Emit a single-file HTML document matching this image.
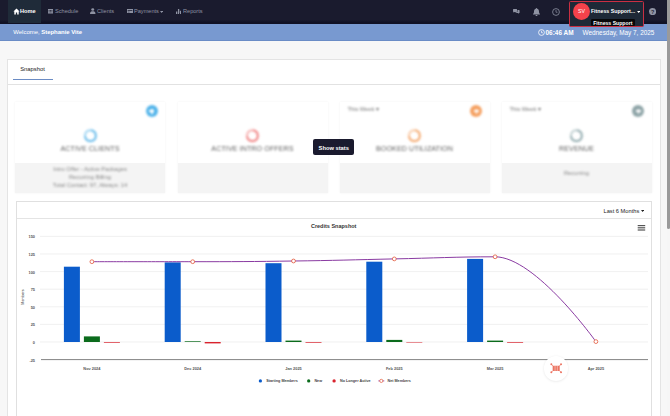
<!DOCTYPE html>
<html><head><meta charset="utf-8"><title>Home</title>
<style>
*{box-sizing:border-box;margin:0;padding:0}
html,body{width:670px;height:416px;overflow:hidden;background:#f7f7f7;font-family:"Liberation Sans",sans-serif;}
.abs{position:absolute}
#nav{left:0;top:0;width:667px;height:23.5px;background:linear-gradient(#1a1b2e 0,#1a1b2e 19.5px,#101124 22.5px,#101124 100%)}
#home{left:7.5px;top:0;width:33.7px;height:22.5px;background:#1f2b39}
.navt{top:8px;font-size:5.6px;color:#8f93a3;white-space:nowrap;line-height:7px}
#welcome{left:0;top:23.5px;width:667px;height:17.5px;background:#7899d0;border-bottom:0.6px solid #6a8cc6}
#panel{left:6.5px;top:59px;width:654.5px;height:370px;background:#fff;border:1px solid #e4e4e4}
.card{top:102px;height:90.5px;width:150px;background:#f4f4f4;box-shadow:0 0 2px rgba(0,0,0,0.06)}
.card .b{filter:blur(1.25px)}
.card .top{position:absolute;left:0;top:0;width:100%;height:60.5px;background:#fff}
.ring{position:absolute;left:68.6px;top:27.3px;width:13.4px;height:13.4px;border-radius:50%;border:2.7px solid #000}
.ctitle{position:absolute;left:0;width:100%;top:43px;text-align:center;font-size:7.1px;color:#5e5e5e;letter-spacing:0.1px;line-height:8px}
.plus{position:absolute;left:130.9px;top:3.1px;width:12px;height:12px;border-radius:50%}
.plus:before{content:"";position:absolute;left:3.5px;top:5.2px;width:5px;height:1.6px;background:#fff}
.plus:after{content:"";position:absolute;left:5.2px;top:3.5px;width:1.6px;height:5px;background:#fff}
.week{position:absolute;left:8px;top:4.1px;font-size:5.7px;color:#757575;line-height:7px;white-space:nowrap}
.foot{position:absolute;left:0;width:100%;text-align:center;font-size:5.8px;color:#888;line-height:8px}
#chartbox{left:16px;top:201px;width:636px;height:230px;background:#fff;border:1px solid #e0e0e0}
#sb{left:666.5px;top:0;width:3.5px;height:416px;background:#f6f6f6}
#sbt{left:666.5px;top:0;width:3.5px;height:228.5px;background:#9a9a9a;border-radius:0 0 1.5px 1.5px}
svg text{font-family:"Liberation Sans",sans-serif}
</style></head><body>
<div class="abs" id="nav"></div>
<div class="abs" id="home"></div>
<svg class="abs" style="left:13px;top:8px" width="7" height="7" viewBox="0 0 16 16"><path d="M8 1 L1 8 H3 V15 H6.5 V10 H9.5 V15 H13 V8 H15 Z" fill="#fff"/></svg>
<div class="abs navt" style="left:20px;color:#fff;font-weight:bold">Home</div>
<svg class="abs" style="left:48px;top:9px" width="5" height="4.6" viewBox="0 0 12 12" preserveAspectRatio="none"><path d="M0 0H12V12H0Z M1.5 3.5V5.5H3.5V3.5Z M4.5 3.5V5.5H7.5V3.5Z M8.5 3.5V5.5H10.5V3.5Z M1.5 6.5V8.5H3.5V6.5Z M4.5 6.5V8.5H7.5V6.5Z M8.5 6.5V8.5H10.5V6.5Z" fill="#8f93a3" fill-rule="evenodd"/></svg>
<div class="abs navt" style="left:55px">Schedule</div>
<svg class="abs" style="left:90px;top:8.200px" width="5.500" height="6" viewBox="0 0 12 14" preserveAspectRatio="none"><circle cx="6" cy="3.5" r="3.2" fill="#8f93a3"/><path d="M0 14 C0 8 3 7.5 6 7.5 C9 7.5 12 8 12 14Z" fill="#8f93a3"/></svg>
<div class="abs navt" style="left:97px">Clients</div>
<svg class="abs" style="left:126.8px;top:9px" width="6" height="4.4" viewBox="0 0 14 10" preserveAspectRatio="none"><path d="M0 0H14V10H0Z M1.5 3V4.5H12.5V3Z M2 6.5V7.5H6V6.5Z" fill="#8f93a3" fill-rule="evenodd"/></svg>
<div class="abs navt" style="left:134px">Payments</div>
<svg class="abs" style="left:160.2px;top:11px" width="3.2" height="2" viewBox="0 0 8 5"><path d="M0 0H8L4 5Z" fill="#8f93a3"/></svg>
<svg class="abs" style="left:176.3px;top:8.8px" width="5.2" height="5" viewBox="0 0 12 12" preserveAspectRatio="none"><path d="M0 6H3V12H0Z M4.5 0H7.5V12H4.5Z M9 4H12V12H9Z" fill="#8f93a3"/></svg>
<div class="abs navt" style="left:183px">Reports</div>

<div class="abs" id="welcome"></div>
<!-- right icons -->
<svg class="abs" style="left:513px;top:8.7px" width="6.6" height="5.1" viewBox="0 0 18 14"><path d="M0 1.5Q0 0 1.5 0H9.5Q11 0 11 1.5V6.5Q11 8 9.5 8H4L1.5 10.5V8Q0 8 0 6.500Z" fill="#8f93a3"/><path d="M12.200 3H16.500Q18 3 18 4.500V9.500Q18 11 16.500 11V13.500L14 11H8.500Q7 11 7 9.500V9.200H10Q12.200 9.200 12.200 7Z" fill="#8f93a3"/></svg>
<svg class="abs" style="left:533px;top:7.5px" width="7" height="8" viewBox="0 0 14 16"><path d="M7 0C8 0 8.300 0.800 8.300 1.400C10.800 2 12 4 12 7C12 10 13 11 14 12V13H0V12C1 11 2 10 2 7C2 4 3.200 2 5.700 1.400C5.700 0.800 6 0 7 0Z M5 14H9C9 15.200 8.200 16 7 16C5.800 16 5 15.200 5 14Z" fill="#8f93a3"/></svg>
<svg class="abs" style="left:552px;top:7.5px" width="8" height="8" viewBox="0 0 16 16"><circle cx="8" cy="8" r="6.800" fill="none" stroke="#8f93a3" stroke-width="1.600"/><path d="M8 4V8.500H11" fill="none" stroke="#8f93a3" stroke-width="1.400"/></svg>

<div class="abs" style="left:568.500px;top:0.500px;width:75.500px;height:26px;border:0.9px solid #c92f42;border-radius:1.5px;background:#1e2937"></div>
<div class="abs" style="left:573px;top:2.500px;width:17px;height:17px;border-radius:50%;background:#f4424b"></div>
<div class="abs" style="left:573px;top:8px;width:17px;text-align:center;font-size:5.200px;line-height:7px;color:#fff">SV</div>
<div class="abs" style="left:590.900px;top:8.200px;font-size:5.250px;line-height:7px;color:#fff;font-weight:bold;white-space:nowrap">Fitness Support...</div>
<svg class="abs" style="left:637px;top:11.2px" width="3.3" height="2" viewBox="0 0 8 5"><path d="M0 0H8L4 5Z" fill="#fff"/></svg>
<div class="abs" style="left:590.800px;top:19.400px;width:44px;height:7px;background:#08080a;border-radius:1.300px"></div>
<div class="abs" style="left:590.800px;top:20px;width:44px;text-align:center;font-size:5.150px;line-height:6.500px;color:#fff;font-weight:bold;white-space:nowrap">Fitness Support</div>
<svg class="abs" style="left:648.8px;top:7.9px" width="7.2" height="7.2" viewBox="0 0 16 16"><circle cx="8" cy="8" r="8" fill="#8f93a3"/><text x="8" y="12.500" font-size="12" font-weight="bold" text-anchor="middle" fill="#1a1b2e">?</text></svg>

<div class="abs" style="left:13.300px;top:29.100px;font-size:5.950px;line-height:7px;color:#fff;white-space:nowrap">Welcome, <b>Stephanie Vite</b></div>
<svg class="abs" style="left:537.500px;top:28.600px" width="7" height="7" viewBox="0 0 14 14"><circle cx="7" cy="7" r="5.800" fill="none" stroke="#fff" stroke-width="1.600"/><path d="M7 3.500V7.500H9.800" fill="none" stroke="#fff" stroke-width="1.400"/></svg>
<div class="abs" style="left:545.500px;top:28.700px;font-size:6.450px;line-height:8px;color:#fff;font-weight:bold;white-space:nowrap">06:46 AM</div>
<div class="abs" style="left:582.500px;top:28.700px;font-size:6.400px;line-height:8px;color:#fff;white-space:nowrap">Wednesday, May 7, 2025</div>

<div class="abs" id="panel"></div>
<div class="abs" style="left:20.200px;top:66.400px;font-size:5.850px;line-height:7px;color:#222;white-space:nowrap">Snapshot</div>
<div class="abs" style="left:13.300px;top:78.800px;width:39.300px;height:0.800px;background:#6b8cc4"></div>
<div class="abs" style="left:8px;top:84px;width:652px;height:1px;background:#e2e2e2"></div>

<!-- cards -->
<div class="abs card" style="left:15px"><div class="top"></div><div class="ring b" style="border-color:#62b9ea;border-top-color:#9fd5f3;transform:rotate(-45deg)"></div><div class="ctitle b">ACTIVE CLIENTS</div><div class="plus b" style="background:#54b5ea"></div>
<div class="foot b" style="top:62.700px">Intro Offer - Active Packages<br>Recurring Billing<br>Total Contact: 97, Always: 14</div></div>
<div class="abs card" style="left:177.500px"><div class="top"></div><div class="ring b" style="border-color:#f07e7e;border-top-color:#f6b3b3;transform:rotate(-45deg)"></div><div class="ctitle b">ACTIVE INTRO OFFERS</div></div>
<div class="abs card" style="left:339.500px"><div class="top"></div><div class="week b">This Week &#9662;</div><div class="ring b" style="border-color:#f4a568;border-top-color:#f9cba8;transform:rotate(-45deg)"></div><div class="ctitle b">BOOKED UTILIZATION</div><div class="plus b" style="background:#f5a264"></div></div>
<div class="abs card" style="left:501.500px"><div class="top"></div><div class="week b">This Week &#9662;</div><div class="ring b" style="border-color:#8fa9ad;border-top-color:#c0d0d2;transform:rotate(-45deg)"></div><div class="ctitle b">REVENUE</div><div class="plus b" style="background:#8fa5a8"></div>
<div class="foot b" style="top:67.200px">Recurring</div></div>

<div class="abs" style="left:313px;top:139.300px;width:41.400px;height:15.800px;background:#1a1a2e;border-radius:2px"></div>
<div class="abs" style="left:313px;top:143.500px;width:41.500px;text-align:center;font-size:5.750px;line-height:8px;color:#fff;font-weight:bold;white-space:nowrap">Show stats</div>

<div class="abs" id="chartbox"></div>
<div class="abs" style="left:17px;top:218.100px;width:634px;height:1px;background:#e4e4e4"></div>
<div class="abs" style="left:603.500px;top:207px;font-size:5.700px;line-height:8px;color:#222;white-space:nowrap">Last 6 Months</div>
<svg class="abs" style="left:641px;top:210.2px" width="3.2" height="2" viewBox="0 0 8 5"><path d="M0 0H8L4 5Z" fill="#222"/></svg>

<svg class="abs" style="left:0;top:0" width="670" height="416" viewBox="0 0 670 416">
<g stroke="#e6e6e6" stroke-width="0.600">
<line x1="40" x2="648" y1="236.4" y2="236.4"/>
<line x1="40" x2="648" y1="254.0" y2="254.0"/>
<line x1="40" x2="648" y1="271.6" y2="271.6"/>
<line x1="40" x2="648" y1="289.2" y2="289.2"/>
<line x1="40" x2="648" y1="306.8" y2="306.8"/>
<line x1="40" x2="648" y1="324.4" y2="324.4"/>
<line x1="40" x2="648" y1="342.0" y2="342.0"/>
</g>
<line x1="41" x2="648" y1="359.600" y2="359.600" stroke="#757575" stroke-width="0.900"/>
<g font-size="3.900" fill="#555" text-anchor="end" font-weight="bold">
<text x="35" y="238.3">150</text>
<text x="35" y="255.9">125</text>
<text x="35" y="273.5">100</text>
<text x="35" y="291.1">75</text>
<text x="35" y="308.7">50</text>
<text x="35" y="326.3">25</text>
<text x="35" y="343.9">0</text>
<text x="35" y="361.5">-25</text>
</g>
<text transform="translate(24.2,297) rotate(-90)" font-size="3.700" fill="#333" text-anchor="middle">Members</text>
<text x="333.700" y="227.900" font-size="5.500" font-weight="bold" fill="#333" text-anchor="middle">Credits Snapshot</text>
<g fill="#555">
<rect x="637.700" y="225" width="7.500" height="1.200"/><rect x="637.700" y="227.200" width="7.500" height="1.200"/><rect x="637.700" y="229.400" width="7.500" height="1.200"/>
</g>
<rect x="63.9" y="266.7" width="16" height="75.3" fill="#0b5ccb"/>
<rect x="83.9" y="336.4" width="16" height="5.6" fill="#0b6b1c"/>
<rect x="103.9" y="342.0" width="16" height="0.7" fill="#d9232e"/>
<rect x="164.7" y="262.4" width="16" height="79.6" fill="#0b5ccb"/>
<rect x="184.7" y="341.3" width="16" height="0.7" fill="#0b6b1c"/>
<rect x="204.7" y="342.0" width="16" height="1.4" fill="#d9232e"/>
<rect x="265.5" y="263.2" width="16" height="78.8" fill="#0b5ccb"/>
<rect x="285.5" y="340.6" width="16" height="1.4" fill="#0b6b1c"/>
<rect x="305.5" y="342.0" width="16" height="0.7" fill="#d9232e"/>
<rect x="366.3" y="261.7" width="16" height="80.3" fill="#0b5ccb"/>
<rect x="386.3" y="339.9" width="16" height="2.1" fill="#0b6b1c"/>
<rect x="406.3" y="342.0" width="16" height="0.5" fill="#d9232e"/>
<rect x="467.1" y="258.9" width="16" height="83.1" fill="#0b5ccb"/>
<rect x="487.1" y="340.6" width="16" height="1.4" fill="#0b6b1c"/>
<rect x="507.1" y="342.0" width="16" height="0.7" fill="#d9232e"/>
<path d="M91.9 261.7 C91.9 261.7 152.4 261.7 192.7 261.7 C233.0 261.7 253.2 261.6 293.5 261.0 C333.8 260.5 354.0 259.8 394.3 258.9 C434.6 258.1 454.8 256.8 495.1 256.8 C535.4 256.8 595.9 341.6 595.9 341.6" fill="none" stroke="#8a3ba2" stroke-width="1"/>
<circle cx="91.9" cy="261.7" r="1.9" fill="#fff" stroke="#e2573a" stroke-width="0.8"/>
<circle cx="192.7" cy="261.7" r="1.9" fill="#fff" stroke="#e2573a" stroke-width="0.8"/>
<circle cx="293.5" cy="261.0" r="1.9" fill="#fff" stroke="#e2573a" stroke-width="0.8"/>
<circle cx="394.3" cy="258.9" r="1.9" fill="#fff" stroke="#e2573a" stroke-width="0.8"/>
<circle cx="495.1" cy="256.8" r="1.9" fill="#fff" stroke="#e2573a" stroke-width="0.8"/>
<circle cx="595.9" cy="341.6" r="1.9" fill="#fff" stroke="#e2573a" stroke-width="0.8"/>

<g font-size="3.900" fill="#555" text-anchor="middle" font-weight="bold">
<text x="91.9" y="370.2">Nov 2024</text>
<text x="192.7" y="370.2">Dec 2024</text>
<text x="293.5" y="370.2">Jan 2025</text>
<text x="394.3" y="370.2">Feb 2025</text>
<text x="495.1" y="370.2">Mar 2025</text>
<text x="595.9" y="370.2">Apr 2025</text>
</g>
<g font-size="3.720" fill="#444" font-weight="bold">
<circle cx="260.400" cy="380.900" r="1.650" fill="#0b5ccb"/><text x="266.300" y="382.300">Starting Members</text>
<circle cx="308.700" cy="380.900" r="1.650" fill="#0b6b1c"/><text x="314.400" y="382.300">New</text>
<circle cx="334.100" cy="380.900" r="1.650" fill="#d9232e"/><text x="340" y="382.300">No Longer Active</text>
<line x1="378.300" x2="384.300" y1="380.900" y2="380.900" stroke="#8e3aa6" stroke-width="0.800"/><circle cx="381.300" cy="380.900" r="1.600" fill="#fff" stroke="#e2573a" stroke-width="0.700"/><text x="387.500" y="382.300">Net Members</text>
</g>
</svg>

<!-- floating button -->
<div class="abs" style="left:543.700px;top:356.100px;width:24.600px;height:24.600px;border-radius:50%;background:#fff;box-shadow:0 0.5px 2.5px rgba(0,0,0,0.10)"></div>
<svg class="abs" style="left:549.800px;top:363.100px" width="12.400" height="10.600" viewBox="0 0 14 12"><g fill="#ec7462"><rect x="3" y="3" width="8" height="6" rx="0.500"/><circle cx="1.500" cy="1.500" r="1.100"/><circle cx="12.500" cy="1.500" r="1.100"/><circle cx="1.500" cy="10.500" r="1.100"/><circle cx="12.500" cy="10.500" r="1.100"/></g><g stroke="#ec7462" stroke-width="0.800"><line x1="1.500" y1="1.500" x2="3.500" y2="3.500"/><line x1="12.500" y1="1.500" x2="10.500" y2="3.500"/><line x1="1.500" y1="10.500" x2="3.500" y2="8.500"/><line x1="12.500" y1="10.500" x2="10.500" y2="8.500"/></g><g stroke="#fff" stroke-width="0.500"><line x1="5.700" y1="3" x2="5.700" y2="9"/><line x1="8.300" y1="3" x2="8.300" y2="9"/></g></svg>

<div class="abs" id="sb"></div><div class="abs" id="sbt"></div>
</body></html>
